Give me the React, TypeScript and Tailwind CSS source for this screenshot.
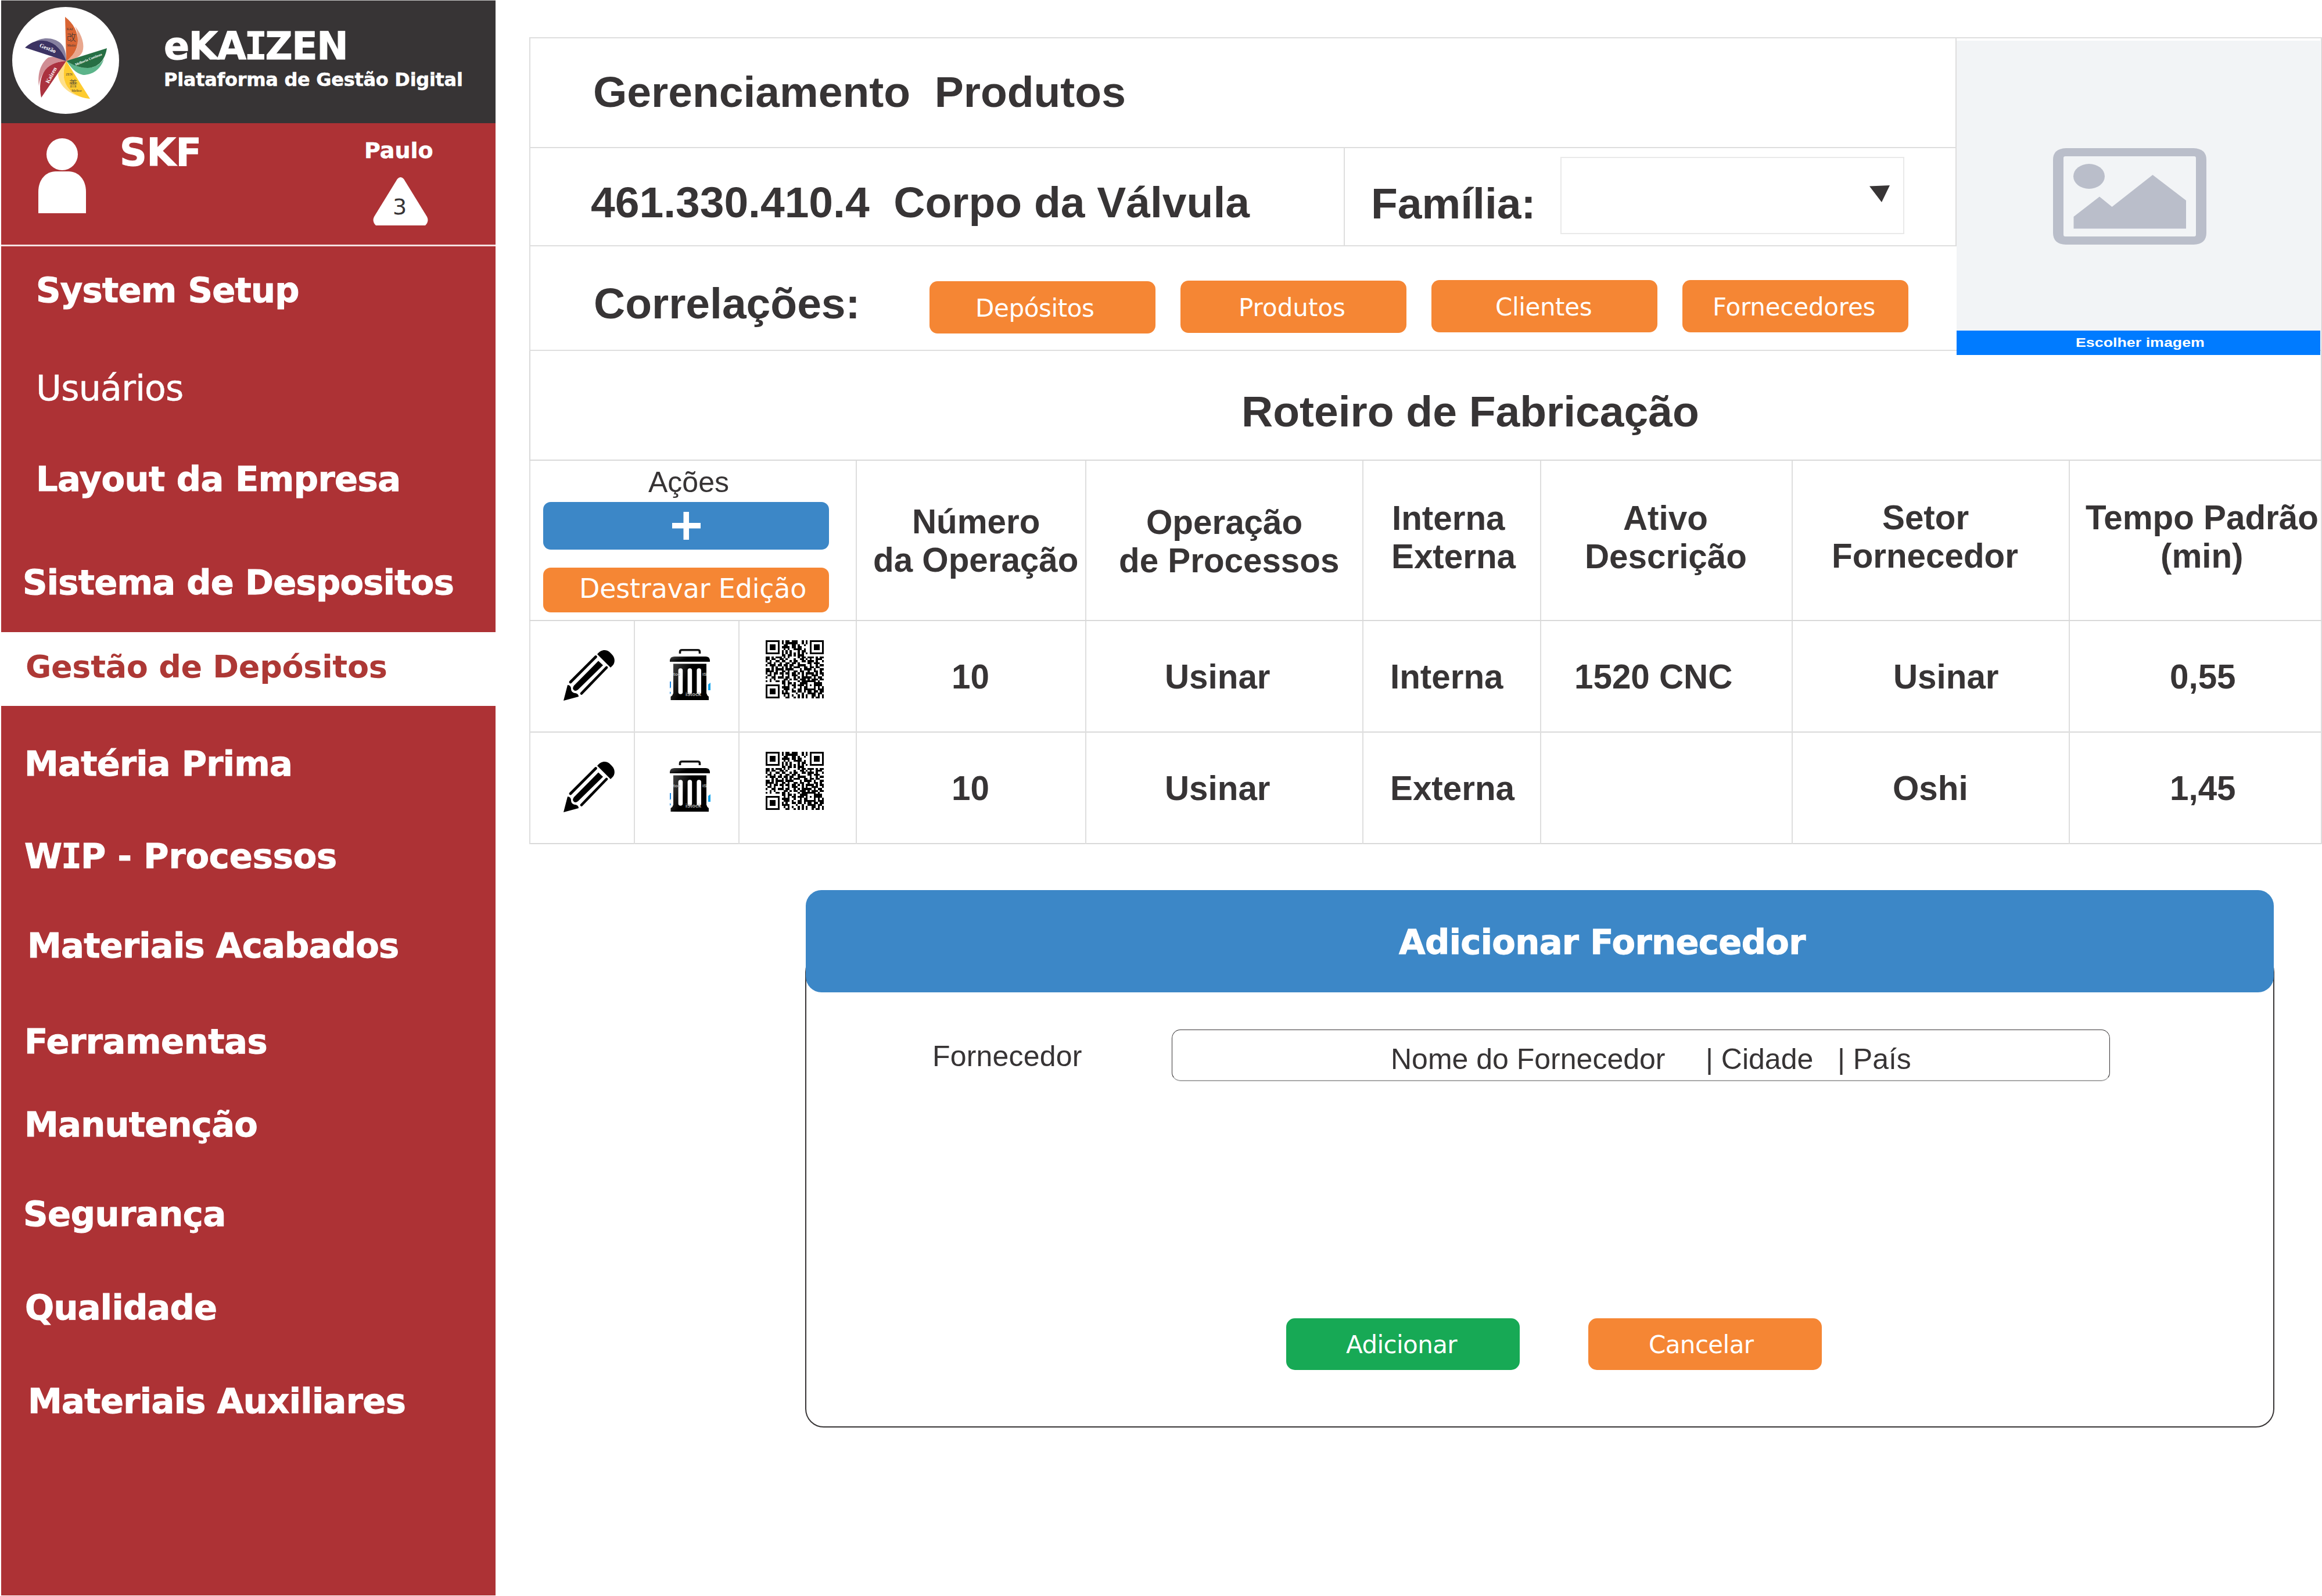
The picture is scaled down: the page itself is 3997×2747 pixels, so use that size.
import type { ReactNode } from 'react'

const VERDANA = "font-['DejaVu_Sans',Verdana,sans-serif]"
const ARIAL = "font-['Liberation_Sans',Arial,sans-serif]"
const HEAVY = 'font-bold [-webkit-text-stroke:1px_currentColor]'

/* Capital I with serifs, set inside the bold sidebar face. */
function SerifI() {
  return <span className="font-['DejaVu_Sans_Mono',monospace] -mx-[0.03em]">I</span>
}

function Logo() {
  return (
    <svg viewBox="0 0 184 184" className="h-[184px] w-[184px] shrink-0">
      <circle cx="92" cy="92" r="92" fill="#fff" />
      <path d="M108 33C121 49 125 66 121 77C116 88 104 90 93 93C105 84 114 72 113 58C113 47 111 40 108 33Z" fill="#e9a78e" />
      <path d="M91 17C106 29 113 43 113 58C113 74 103 86 93 93Z" fill="#d96534" />
      <path d="M158 89C152 108 138 117 122 117C108 114 102 104 93 93C105 100 116 105 130 105C145 104 153 97 158 89Z" fill="#5cb48a" />
      <path d="M163 71C160 90 150 104 130 105C113 105 102 98 93 93Z" fill="#266f44" />
      <path d="M118 155C94 148 80 133 79 116C80 106 88 100 93 93C90 103 87 112 89 122C93 140 104 150 118 155Z" fill="#fee08c" />
      <path d="M134 158C110 156 93 143 89 122C87 110 91 100 93 93Z" fill="#fecb2f" />
      <path d="M46 136C43 113 50 96 62 87C72 84 84 88 93 93C80 94 66 97 57 108C50 117 47 127 46 136Z" fill="#d08d94" />
      <path d="M50 156C46 138 48 120 57 108C66 97 80 94 93 93Z" fill="#ab323f" />
      <path d="M36 62C52 50 72 53 83 62C91 69 93 82 93 93C88 80 80 66 64 60C54 57 44 58 36 62Z" fill="#86809f" />
      <path d="M22 70C34 58 50 55 64 60C80 66 88 80 93 93Z" fill="#3c3363" />
      <g fontFamily="'Liberation Serif', serif" textAnchor="middle">
        <text transform="translate(60 74) rotate(22)" fontSize="10" fontWeight="bold" fill="#fff">Gestão</text>
        <text transform="translate(70 119) rotate(-62)" fontSize="10" fontWeight="bold" fill="#fff">Kaizen</text>
        <text transform="translate(132 92) rotate(-22)" fontSize="6" fontWeight="bold" fill="#fff">Melhoria Continua</text>
        <text x="99" y="40" fontSize="6" fill="#373435">KAI</text>
        <text x="102" y="68" fontSize="5.5" fill="#373435">Mudar</text>
        <text x="98" y="118" fontSize="6" fill="#373435">ZEN</text>
        <text x="111" y="146" fontSize="6" fill="#373435">Melhor</text>
      </g>
      <g fontFamily="'Noto Sans CJK JP', sans-serif" textAnchor="middle" fontWeight="300" fill="#373435">
        <text x="102" y="58" fontSize="16">改</text>
        <text x="105" y="137" fontSize="15">善</text>
      </g>
    </svg>
  )
}

function PersonIcon() {
  return (
    <svg viewBox="0 0 82 129" className="h-[129px] w-[82px] shrink-0" fill="#fff">
      <ellipse cx="41" cy="27.5" rx="27" ry="27.5" />
      <path d="M0 129V92C0 71 13 57 30 57H52C69 57 82 71 82 92V129Z" />
    </svg>
  )
}

function AlertTriangle() {
  return (
    <svg viewBox="0 0 95 83" className="h-[83px] w-[95px]">
      <path d="M42 3Q47.500-3 53 3L93 68Q97 76 90 83H5Q-2 76 2 68Z" fill="#fff" />
      <text x="46" y="64" fontSize="38" textAnchor="middle" fill="#373435" fontFamily="'DejaVu Sans', Verdana, sans-serif">3</text>
    </svg>
  )
}

function PencilIcon() {
  return (
    <svg viewBox="0 0 88 88" className="h-[88px] w-[88px]">
      <path d="M58 8C64 0 73-1 79 4L83 8C89 14 89 22 85 27L81 31Z" />
      <path d="M60 19.500L68 27L25 69Q20 73 17 69Q15 66 18 62Z" />
      <path d="M55.500 12.500L12 56" stroke="#000" strokeWidth="4.600" strokeLinecap="round" />
      <path d="M74 31L31 75.500" stroke="#000" strokeWidth="4.600" strokeLinecap="round" />
      <path d="M7 61C11 61 13 64 13 67.500C13 72 16 74.500 20 75C24 75.500 26 78 26 81L0 88Z" />
    </svg>
  )
}

function TrashIcon({ id }: { id: string }) {
  return (
    <svg viewBox="0 0 70 88" className="h-[88px] w-[70px]">
      <defs>
        <linearGradient id={id} x1="0" x2="1" y1="0" y2="0.4">
          <stop offset="0" stopColor="#4a4a4a" />
          <stop offset="0.5" stopColor="#000" />
        </linearGradient>
      </defs>
      <path d="M17.500 8V5Q17.500 1.800 21 1.800H48Q51.500 1.800 51.500 5V8" fill="none" stroke="#151515" strokeWidth="3.600" />
      <path d="M0 22V19Q1 13 8 13H62Q68 13 69 19V22Z" fill={`url(#${id})`} />
      <path d="M6 25.500H63V76Q64 80 67 82V88H1.500V82Q5 80 6 76Z" fill={`url(#${id})`} />
      <path d="M18.400 37V74M34.400 37V74M50.200 37V74" stroke="#fff" strokeWidth="7.600" strokeLinecap="round" />
      <path d="M0 56H2V66L0 68ZM0 73L2 75.500L0 78Z" fill="#1e88e5" />
      <path d="M66 61L70 58V71H66Z" fill="#14a5ee" />
      <g fontFamily="'Liberation Sans', Arial, sans-serif" fontWeight="bold" fill="#b5b5b5">
        <text x="27" y="80.500" fontSize="9">iStock</text>
        <text x="6" y="46" fontSize="8">toc</text>
        <text x="56" y="46" fontSize="8">iS</text>
      </g>
    </svg>
  )
}

const QR_ROWS = [
  '#######.#.##.###..#.#.#######',
  '#.....#.#.######..#.#.#.....#',
  '#.###.#..##..##.#..#..#.###.#',
  '#.###.#.####.##.##....#.###.#',
  '#.###.#..#.#..####.#..#.###.#',
  '#.....#.#.#.#...#.##..#.....#',
  '#######.#.#.#.#.#.#.#.#######',
  '........##.##.#.###..........',
  '##.#.###.#.#....#.##.###.#.##',
  '##.##..##.#...#..##.#.#..###.',
  '#.#..##.##..#.##..##.###.#..#',
  '.##.#..#..##.##.#....##.###..',
  '#.###.##.##.##..####..#..#.##',
  '...#.#..#.#.#.###..##.##.##..',
  '##.#.####.####...#.####.#..##',
  '####.#..##.#..##.##..#..##.#.',
  '#.#.##.##.##.##.#.#.####.#.##',
  '.##.#...#..#.###..#.#..###..#',
  '#..##.###.##..#.#.#####.#.##.',
  '..#.#....##.#.##.###.#.###.##',
  '#.#..##.##.#....#.#######.#..',
  '........##.##.#..####...####.',
  '#######..#.#.##.###.#.#.####.',
  '#.....#.####..#..#.##...#.#.#',
  '#.###.#..###.#..##.######.###',
  '#.###.#.#.#..##.##.#.##.##.##',
  '#.###.#.####...#..#..####.##.',
  '#.....#..#.#.#..#.#.#..##.#.#',
  '#######...##..#.#.#.#..#.##.#',
]

function QrCode() {
  const d = QR_ROWS.map((row, y) =>
    row.split('').map((c, x) => (c === '#' ? `M${x} ${y}h1v1h-1z` : '')).join(''),
  ).join('')
  return (
    <svg viewBox="0 0 29 29" className="h-[100px] w-[100px]" shapeRendering="crispEdges">
      <path d={d} />
    </svg>
  )
}

function ImagePlaceholder() {
  return (
    <svg viewBox="0 0 264 166" className="h-[166px] w-[264px]" fill="#babeca">
      <path fillRule="evenodd" d="M22 0H242Q264 1 264 20V146Q264 165 242 166H22Q0 165 0 146V20Q0 1 22 0ZM21 14Q18 14 18 17V149Q18 152 21 152H243Q246 152 246 149V17Q246 14 243 14Z" />
      <ellipse cx="62" cy="48.500" rx="27" ry="21.500" />
      <path d="M35.500 118L80 83.500L101.500 101L171.500 46L229 90V138.500H35.500Z" />
    </svg>
  )
}

const NAV_ABOVE = [
  { label: 'System Setup', cls: `mt-[46px] pl-[60px] ${HEAVY}` },
  { label: 'Usuários', cls: 'mt-[108px] pl-[60px] text-[60px] tracking-[-0.7px] [-webkit-text-stroke:0.5px_currentColor]' },
  { label: 'Layout da Empresa', cls: `mt-[97px] pl-[60px] tracking-[-0.5px] ${HEAVY}` },
  { label: 'Sistema de Despositos', cls: `mt-[118px] pl-[37px] ${HEAVY}` },
]

const NAV_BELOW: { label: ReactNode; cls: string }[] = [
  { label: 'Matéria Prima', cls: 'mt-[70px] pl-[40px]' },
  { label: <>W<SerifI />P - Processos</>, cls: 'mt-[99px] pl-[40px] tracking-[-0.1px]' },
  { label: 'Materiais Acabados', cls: 'mt-[94px] pl-[45px]' },
  { label: 'Ferramentas', cls: 'mt-[105px] pl-[40px] tracking-[-0.4px]' },
  { label: 'Manutenção', cls: 'mt-[83px] pl-[40px]' },
  { label: 'Segurança', cls: 'mt-[94px] pl-[38px] tracking-[-0.4px]' },
  { label: 'Qualidade', cls: 'mt-[101px] pl-[41px]' },
  { label: 'Materiais Auxiliares', cls: 'mt-[101px] pl-[46px] tracking-[-0.6px]' },
]

function Sidebar() {
  return (
    <aside className={`${VERDANA} ml-[2px] flex h-[2746px] w-[851px] shrink-0 flex-col bg-[#ad3235] text-white`}>
      <header className="flex h-[212px] border-t border-[#c9c9c9] bg-[#373435]">
        <div className="pt-[11px] pl-[19px]">
          <Logo />
        </div>
        <div className="pt-[44px] pl-[77px] whitespace-nowrap">
          <div className={`text-[65px] leading-[70px] tracking-[-1.4px] ${HEAVY}`}>eKA<SerifI />ZEN</div>
          <div className="mt-[2px] text-[32px] leading-[40px] font-bold tracking-[-0.29px] [-webkit-text-stroke:0.5px_currentColor]">
            Plataforma de Gestão Digital
          </div>
        </div>
      </header>
      <section className="flex h-[212px] border-b-[3px] border-[#f3e0e0]">
        <div className="pt-[26px] pl-[64px]">
          <PersonIcon />
        </div>
        <div className={`w-[478px] pt-[16px] pl-[58px] text-[65px] leading-[70px] tracking-[-0.4px] ${HEAVY}`}>SKF</div>
        <div className="pt-[27px] pl-px">
          <div className="text-[38px] leading-[40px] font-bold [-webkit-text-stroke:0.5px_currentColor]">Paulo</div>
          <div className="mt-[26px] ml-[15px]">
            <AlertTriangle />
          </div>
        </div>
      </section>
      <nav className="text-[59px] leading-[60px] tracking-[-0.7px] whitespace-nowrap">
        {NAV_ABOVE.map((item) => (
          <div key={item.label} className={item.cls}>{item.label}</div>
        ))}
        <div className="mt-[55px] -ml-[2px] h-[127px] bg-white pt-[30px] pl-[44px] text-[54px] font-bold tracking-[-0.3px] text-[#ad3835]">
          Gestão de Depósitos
        </div>
        <div className={HEAVY}>
          {NAV_BELOW.map((item, i) => (
            <div key={i} className={item.cls}>{item.label}</div>
          ))}
        </div>
      </nav>
    </aside>
  )
}

const CORRELATIONS = [
  { label: 'Depósitos', cls: 'mt-[60px] pl-[79px]' },
  { label: 'Produtos', cls: 'mt-[59px] pl-[100px] tracking-[0px]' },
  { label: 'Clientes', cls: 'mt-[58px] pl-[110px]' },
  { label: 'Fornecedores', cls: 'mt-[58px] pl-[52px] tracking-[-0.2px]' },
]

function ProductHeader() {
  return (
    <div className="flex h-[540px] border-l-2 border-[#dedede] text-[75px] leading-[80px] font-bold whitespace-pre">
      <div className="w-[2455px] shrink-0">
        <div className="h-[191px] border-y-2 border-r-2 border-[#dedede] pt-[52px] pl-[108px]">Gerenciamento  Produtos</div>
        <div className="flex h-[169px] border-r-2 border-b-2 border-[#dedede]">
          <div className="w-[1400px] pt-[53px] pl-[104px]">461.330.410.4  Corpo da Válvula</div>
          <div className="flex flex-1 border-l-2 border-[#dedede]">
            <div className="w-[371px] pt-[55px] pl-[45px]">Família:</div>
            <div className="mt-[15px] flex h-[133px] w-[592px] justify-end border-2 border-[#e9e9e9] pt-[47px] pr-[23px]">
              <svg viewBox="0 0 35 29" className="h-[29px] w-[35px]" fill="#373435">
                <path d="M0 1.500L35 0L21 29Z" />
              </svg>
            </div>
          </div>
        </div>
        <div className="flex h-[180px] border-b-2 border-[#dedede]">
          <div className="w-[687px] pt-[58px] pl-[109px]">Correlações:</div>
          <div className={`${VERDANA} flex gap-[43px] text-[42px] leading-[90px] font-normal tracking-[-0.4px] text-white`}>
            {CORRELATIONS.map((b) => (
              <div key={b.label} className={`h-[90px] w-[389px] rounded-[14px] bg-[#f58634] pt-[2px] ${b.cls}`}>{b.label}</div>
            ))}
          </div>
        </div>
      </div>
      <div className="flex-1 border-t-2 border-r-2 border-b-2 border-[#dedede] pt-[4px] pr-[1px]">
        <div className="h-[499px] bg-[#f2f4f6] pt-[185px] pl-[166px]">
          <ImagePlaceholder />
        </div>
        <div className="relative h-[42px] bg-[#007bff] text-[22px] leading-[41px] text-white">
          <span className="ml-[205px] inline-block origin-left scale-x-[1.218]">Escolher imagem</span>
        </div>
      </div>
    </div>
  )
}

const COLS = 'grid grid-cols-[562px_395px_477px_306px_433px_477px_436px]'

const HEADINGS = [
  { cls: 'pt-[72px]', lines: [['Número', 'pl-[95px]'], ['da Operação', 'pl-[28px]']] },
  { cls: 'pt-[73px]', lines: [['Operação', 'pl-[103px]'], ['de Processos', 'pl-[56px]']] },
  { cls: 'pt-[66px]', lines: [['Interna', 'pl-[49px]'], ['Externa', 'pl-[48px]']] },
  { cls: 'pt-[66px]', lines: [['Ativo', 'pl-[141px]'], ['Descrição', 'pl-[75px]']] },
  { cls: 'pt-[65px]', lines: [['Setor', 'pl-[154px]'], ['Fornecedor', 'pl-[67px]']] },
  { cls: 'pt-[65px] border-r-2', lines: [['Tempo Padrão', 'pl-[27px]'], ['(min)', 'pl-[156px]']] },
]

const ROWS = [
  [['10', 'pl-[163px]'], ['Usinar', 'pl-[135px]'], ['Interna', 'pl-[46px]'], ['1520 CNC', 'pl-[57px]'], ['Usinar', 'pl-[173px]'], ['0,55', 'pl-[172px] border-r-2']],
  [['10', 'pl-[163px]'], ['Usinar', 'pl-[135px]'], ['Externa', 'pl-[46px]'], ['', ''], ['Oshi', 'pl-[172px]'], ['1,45', 'pl-[172px] border-r-2']],
]

function RoutingTable() {
  return (
    <div className="whitespace-nowrap">
      <div className="h-[189px] border-x-2 border-b-2 border-[#d9d9d9] pt-[64px] pl-[1224px] text-[75px] leading-[80px] font-bold">
        Roteiro de Fabricação
      </div>
      <div className={`${COLS} h-[276px] border-b-2 border-[#d9d9d9]`}>
        <div className="border-l-2 border-[#dedede] pt-[12px] pl-[22px]">
          <div className="pl-[181px] text-[50px] leading-[50px]">Ações</div>
          <div className="mt-[9px] flex h-[82px] w-[492px] items-center justify-center rounded-[13px] bg-[#3c87c7]">
            <svg viewBox="0 0 49 48" className="h-[48px] w-[49px]" fill="#fff">
              <path d="M19.500 0h9.500v19h20v9.500h-20V48h-9.500V28.500H0V19h19.500z" />
            </svg>
          </div>
          <div className={`${VERDANA} mt-[31px] h-[77px] w-[492px] rounded-[13px] bg-[#f58634] pl-[62px] text-[46px] leading-[73px] tracking-[-0.2px] text-white`}>
            Destravar Edição
          </div>
        </div>
        {HEADINGS.map((h, i) => (
          <div key={i} className={`border-l-2 border-[#dedede] text-[58.330px] leading-[66px] font-bold ${h.cls}`}>
            {h.lines.map(([t, pl]) => (
              <div key={t} className={pl}>{t}</div>
            ))}
          </div>
        ))}
      </div>
      {ROWS.map((row, r) => (
        <div key={r} className={`${COLS} h-[192px] border-b-2 border-[#d9d9d9]`}>
          <div className="flex">
            <div className="w-[180px] border-l-2 border-[#dedede] pt-[49px] pl-[57px]"><PencilIcon /></div>
            <div className="w-[180px] border-l-2 border-[#dedede] pt-[48px] pl-[60px]"><TrashIcon id={`trash-${r}`} /></div>
            <div className="w-[202px] border-l-2 border-[#dedede] pt-[33px] pl-[45px]"><QrCode /></div>
          </div>
          {row.map(([t, cls], i) => (
            <div key={i} className={`border-l-2 border-[#dedede] text-[58.330px] leading-[192px] font-bold ${cls}`}>{t}</div>
          ))}
        </div>
      ))}
    </div>
  )
}

function SupplierForm() {
  return (
    <section className="mt-[79px] ml-[475px] w-[2529px] whitespace-pre">
      <div className={`${VERDANA} relative mx-px h-[176px] rounded-[27px] bg-[#3c87c7] pl-[1021px] text-[59px] leading-[180px] tracking-[-0.6px] text-white ${HEAVY}`}>
        Adicionar Fornecedor
      </div>
      <div className="-mt-[67px] h-[816px] rounded-[32px] border-[2.500px] border-[#373435] pt-[129px]">
        <div className="flex h-[89px] text-[50px] leading-[92px]">
          <div className="w-[629px] pl-[217px] tracking-[0.2px]">Fornecedor</div>
          <div className="w-[1615px] rounded-[15px] border border-b-2 border-[#373435] border-b-[#a9a9a9] pl-[376px] leading-[100px]">
            Nome do Fornecedor     | Cidade   | País
          </div>
        </div>
        <div className={`${VERDANA} mt-[408px] ml-[826px] flex gap-[118px] text-[42px] leading-[92px] tracking-[-0.6px] text-white`}>
          <div className="h-[89px] w-[402px] rounded-[15px] bg-[#17a955] pl-[103px]">Adicionar</div>
          <div className="h-[89px] w-[402px] rounded-[15px] bg-[#f58634] pl-[104px]">Cancelar</div>
        </div>
      </div>
    </section>
  )
}

export default function App() {
  return (
    <div className={`${ARIAL} flex h-[2747px] w-[3997px] overflow-hidden bg-white text-[#373435]`}>
      <Sidebar />
      <main className="w-[3144px] pt-[64px] pl-[58px]">
        <ProductHeader />
        <RoutingTable />
        <SupplierForm />
      </main>
    </div>
  )
}
